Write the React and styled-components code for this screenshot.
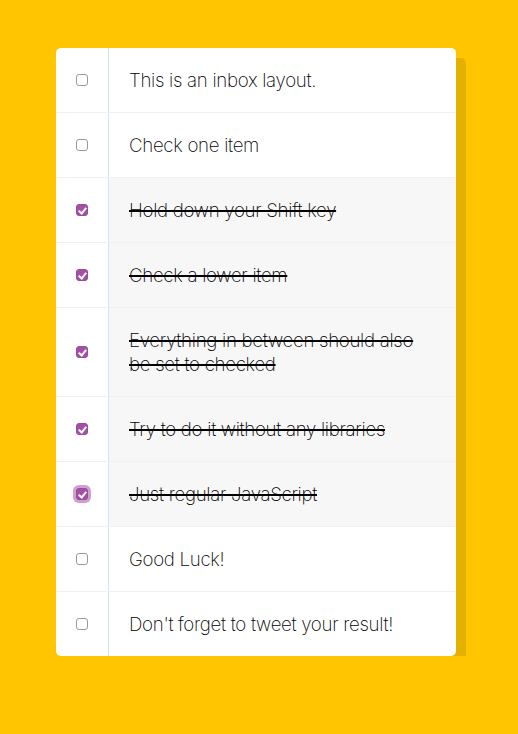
import React, { useState } from "react";
import styled, { createGlobalStyle } from "styled-components";

const GlobalStyle = createGlobalStyle`
  html {
    background: #ffc600;
    font-family: sans-serif;
  }
  body {
    margin: 0;
    padding: 48px 0 0 56px;
  }
`;

const Inbox = styled.div`
  width: 400px;
  background: white;
  border-radius: 5px;
  box-shadow: 10px 10px 0 rgba(0, 0, 0, 0.1);
`;

const Item = styled.div`
  display: flex;
  align-items: center;
  border-bottom: 1px solid #f1f1f1;
  &:last-child {
    border-bottom: 0;
  }
`;

// macOS-like checkbox, drawn by hand
const Box = styled.input`
  appearance: none;
  -webkit-appearance: none;
  position: relative;
  margin: 20px;
  width: 12px;
  height: 12px;
  flex-shrink: 0;
  box-sizing: border-box;
  border: 1px solid #9a9a9a;
  border-radius: 3px;
  background: #fff;
  box-shadow: ${(p) => (p.$focused ? "0 0 0 3px rgba(165, 80, 167, 0.55)" : "none")};

  &:checked {
    background: #a550a7;
    border-color: #9a4a9c;
  }
  &:checked::after {
    content: "";
    position: absolute;
    left: 3.2px;
    top: 0.8px;
    width: 3px;
    height: 6px;
    border: solid #fff;
    border-width: 0 2px 2px 0;
    transform: rotate(40deg);
  }
`;

const Text = styled.p`
  margin: 0;
  padding: 21px 20px 19px;
  flex: 1;
  font-family: Inter, "Liberation Sans", sans-serif;
  font-size: 18.7px;
  font-weight: 250;
  line-height: 24px;
  letter-spacing: -0.3px;
  color: #000;
  border-left: 1px solid #d1e2ff;
  background: ${(p) => (p.$done ? "#f7f7f7" : "transparent")};
  text-decoration: ${(p) => (p.$done ? "line-through" : "none")};
  text-decoration-color: #000;
  text-decoration-thickness: 2px;
`;

const items = [
  { text: "This is an inbox layout.", done: false },
  { text: "Check one item", done: false },
  { text: "Hold down your Shift key", done: true },
  { text: "Check a lower item", done: true },
  { text: "Everything in between should also be set to checked", done: true },
  { text: "Try to do it without any libraries", done: true },
  { text: "Just regular JavaScript", done: true, focused: true },
  { text: "Good Luck!", done: false },
  { text: "Don't forget to tweet your result!", done: false },
];

export default function App() {
  const [list, setList] = useState(items);

  const toggle = (i) => {
    setList(list.map((it, j) => (j === i ? { ...it, done: !it.done } : it)));
  };

  return (
    <>
      <GlobalStyle />
      <Inbox>
        {list.map((it, i) => (
          <Item key={i}>
            <Box
              type="checkbox"
              checked={it.done}
              $focused={it.focused}
              onChange={() => toggle(i)}
            />
            <Text $done={it.done}>{it.text}</Text>
          </Item>
        ))}
      </Inbox>
    </>
  );
}
